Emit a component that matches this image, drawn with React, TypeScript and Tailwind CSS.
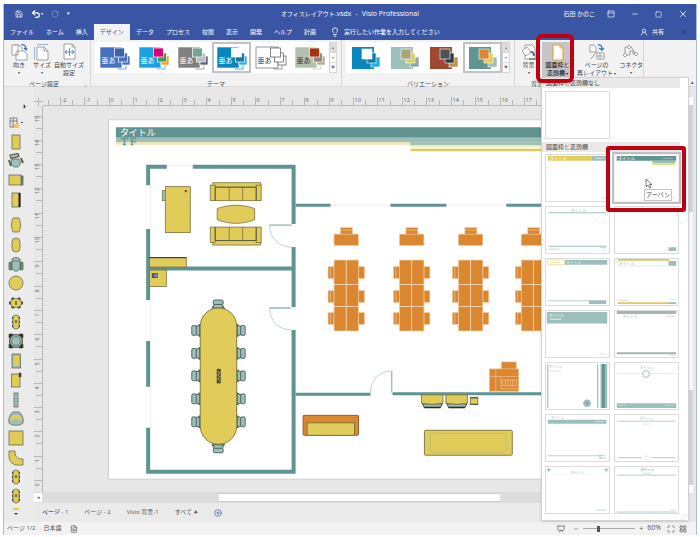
import type { ReactNode } from "react";
import { Lightbulb, Save, Undo2, RotateCw, UserRound, X, Minus, Square, PanelTop, PlusCircle, Presentation, Maximize, LayoutGrid, FileText } from "lucide-react";

const teal = "#5f9490";
const lightTeal = "#9cbfbc";
const yellow = "#e1cc5a";
const orange = "#db8730";
const line = "#77713f";

const tabs = ["ファイル", "ホーム", "挿入", "デザイン", "データ", "プロセス", "校閲", "表示", "開発", "ヘルプ", "計画"];

const themes = [
  { back: "#4472c4", front: "#3d64ac", mid: "#4472c4", far: "#4472c4", text: "#ffffff" },
  { back: "#1ca0e3", front: "#dc0073", mid: "#3f9c48", far: "#ff9b0b", text: "#ffffff" },
  { back: "#808080", front: "#75a596", mid: "#bdbdbd", far: "#566275", text: "#ffffff" },
  { back: "#0787bd", front: "#ffffff", mid: "#137aa5", far: "#1fb0e6", text: "#ffffff" },
  { back: "#ffffff", front: "#ffffff", mid: "#ffffff", far: "#ffffff", text: "#444444" },
  { back: "#b4c0ae", front: "#a73010", mid: "#8b8c7e", far: "#b3a78c", text: "#333333" },
];

const variants = [
  { back: "#0787bd", front: "#ffffff", mid: "#137aa5", far: "#1fb0e6" },
  { back: "#9cbfbc", front: "#a8a679", mid: "#d6cf61", far: "#8ea8a4" },
  { back: "#9e4830", front: "#4c5356", mid: "#33383c", far: "#c19145" },
  { back: "#5f9490", front: "#db8730", mid: "#e1cc5a", far: "#9cbfbc" },
];

function ThemeTile({ theme, selected }: { theme: (typeof themes)[number]; selected: boolean }) {
  const outline = theme.back === "#ffffff" ? "#555555" : "#ffffff";
  return (
    <button aria-label="テーマ" className={`w-[39px] h-[31px] flex items-center justify-center ${selected ? "border-2 border-[#c2c2c2]" : ""}`}>
      <svg width="32" height="26" viewBox="0 0 32 26" className="shrink-0">
        <path d="M19 18v6h8v-5M17 22l2-2 2 2" fill="none" stroke={theme.back === "#ffffff" ? "#777" : theme.back} strokeWidth=".7" />
        <rect x="1" y="2" width="22" height="21" fill={theme.back} stroke={outline} strokeWidth=".6" />
        <text x="2.5" y="18" fontSize="7" fill={theme.text}>亜あ</text>
        <rect x="23" y="11" width="8" height="9" fill={theme.far} stroke={outline} strokeWidth=".7" />
        <rect x="19.500" y="8" width="9" height="9" fill={theme.mid} stroke={outline} strokeWidth=".7" />
        <rect x="15.500" y="3" width="10" height="9" fill={theme.front} stroke={outline} strokeWidth=".7" />
      </svg>
    </button>
  );
}

function VariantTile({ variant, selected }: { variant: (typeof variants)[number]; selected: boolean }) {
  return (
    <button aria-label="バリエーション" className={`w-[39px] h-[31px] flex items-center justify-center ${selected ? "border-2 border-[#c2c2c2]" : ""}`}>
      <svg width="30" height="24" viewBox="0 0 30 24" className="shrink-0">
        <rect x="1" y="1" width="22" height="22" fill={variant.back} />
        <rect x="20" y="11" width="9" height="10" fill={variant.far} stroke="#fff" strokeWidth=".6" />
        <rect x="16" y="7" width="9" height="10" fill={variant.mid} stroke="#fff" strokeWidth=".6" />
        <rect x="11" y="3" width="10" height="10" fill={variant.front} stroke="#fff" strokeWidth=".6" />
      </svg>
    </button>
  );
}

function GalleryScroll() {
  return (
    <div className="w-2 flex flex-col border border-[#d8d8d8] text-[#777777] bg-[#fafafa]">
      <button aria-label="上へ" className="flex-1 bg-[#dcdcdc] text-[4px] leading-none">▴</button>
      <button aria-label="下へ" className="flex-1 border-y border-[#d8d8d8] text-[4px] leading-none">▾</button>
      <button aria-label="その他" className="flex-1 text-[4px] leading-none">▼</button>
    </div>
  );
}

function RibbonButton({ icon, label, label2, arrow, className = "" }: { icon: ReactNode; label: string; label2?: string; arrow?: boolean; className?: string }) {
  return (
    <button className={`h-[38px] pt-px flex flex-col items-center whitespace-nowrap text-[6px] leading-[8px] ${className}`}>
      <svg width="18" height="18" viewBox="0 0 18 18" fill="none" stroke="#8a8a8a" strokeWidth=".8" className="shrink-0">{icon}</svg>
      <span>{label}</span>
      {label2 ? <span>{label2}{arrow && <span className="text-[4px]"> ▾</span>}</span> : arrow && <span className="text-[4px]">▾</span>}
    </button>
  );
}

function Ribbon() {
  return (
    <div className="h-[47px] flex bg-[#f2f2f2] text-[#444444] border-b border-[#dcdcdc]">
      <section className="w-[87px] shrink-0 flex flex-col border-r border-[#d5d5d5] pt-0.5">
        <div className="flex">
          <RibbonButton className="w-[30px]" label="向き" arrow icon={<><path d="M3 12V2h6l3 3v2" fill="#fff" /><path d="M2 2h6v10H2zM8 8h6l3 3v6H6V9z" fill="#fff" /><path d="M11 2c3-1 5 1 5 4m-2-1 2 2 1-2" stroke="#3978b0" strokeWidth="1.2" /></>} />
          <RibbonButton className="w-4" label="サイズ" arrow icon={<><path d="M4 4h7l4 4v9H4z" fill="#fff" /><path d="M11 4v4h4" /><path d="M4 1.500h11M1.500 4v13" stroke="#77a7cf" /></>} />
          <RibbonButton className="w-[38px]" label="自動サイズ" label2="設定" icon={<><path d="M4 1h8l3 3v12H4z" fill="#fff" /><path d="M12 1v3h3" /><path d="M5 9h9M9.500 5v8M7 7 5 9l2 2M12 7l2 2-2 2" stroke="#3978b0" /></>} />
        </div>
        <div className="flex items-center text-[6px] leading-[8px]">
          <span className="flex-1 text-center">ページ設定</span>
          <button aria-label="ページ設定の詳細" className="pr-1 text-[5px]">⌟</button>
        </div>
      </section>
      <section className="w-[251px] shrink-0 flex flex-col border-r border-[#d5d5d5] pt-0.5 px-1">
        <div className="flex h-[31px] mb-[7px] bg-white">
          {themes.map((theme, i) => (
            <ThemeTile key={i} theme={theme} selected={i === 3} />
          ))}
          <GalleryScroll />
        </div>
        <div className="text-[6px] leading-[8px] text-center">テーマ</div>
      </section>
      <section className="w-[173px] shrink-0 flex flex-col border-r border-[#d5d5d5] pt-0.5 px-1">
        <div className="flex h-[31px] mb-[7px] bg-white">
          {variants.map((variant, i) => (
            <VariantTile key={i} variant={variant} selected={i === 3} />
          ))}
          <GalleryScroll />
        </div>
        <div className="text-[6px] leading-[8px] text-center">バリエーション</div>
      </section>
      <section className="relative w-[59px] shrink-0 flex flex-col border-r border-[#d5d5d5]">
        <div className="flex">
          <RibbonButton className="w-[27px] mt-0.5" label="背景" arrow icon={<><path d="M5 2h7l3 3v11H5z" fill="#fff" /><path d="m2 8 5-4 4 5-5 4z" fill="#fff" /><path d="M11 9c2 0 3 2 3 4" stroke="#3978b0" strokeWidth="2" /><path d="M9 16h7" stroke="#333" /></>} />
          <RibbonButton className="w-[31px] mt-0.5 bg-[#c5c5c5] text-black" label="図面枠と" label2="表題欄" arrow icon={<><path d="M4 2h7l3 3v12H4z" fill="#fff" stroke="#e1a541" strokeWidth="1.200" /><path d="M11 2v3h3" stroke="#e1a541" /></>} />
        </div>
        <div className="pl-4 text-[6px] leading-[8px]">背景</div>
        <div className="absolute z-20 -top-1.5 left-[21px] w-[38px] h-[49px] rounded-md border-4 border-[#c00010]" />
      </section>
      <section className="w-[70px] shrink-0 flex border-r border-[#d5d5d5] pt-0.5">
        <RibbonButton className="w-[46px]" label="ページの" label2="再レイアウト" arrow icon={<><path d="M2 2h4l2 2v5H2zM9 10h7v6H9zM12 10v6M9 13h7" fill="#fff" /><path d="M10 2c4-1 4 3 4 5l2-2m-2 2-3-2" stroke="#2f79b5" strokeWidth="1.300" /><path d="m3 16 6-8" /></>} />
        <RibbonButton className="w-6" label="コネクタ" arrow icon={<><path d="m7 2 2 2-2 2-2-2zM3 10l2 2-2 2-2-2zM14 9l2 2-2 2-2-2z" fill="#fff" /><path d="M5 4H3v6m6-6 4 6M5 12h3V8h3v3h1" /></>} />
      </section>
      <div className="flex-1 flex items-end justify-end pr-0.5">
        <button aria-label="リボンを折りたたむ" className="text-[5px] leading-[8px]">▴</button>
      </div>
    </div>
  );
}

// Small stencil previews for the minimized shapes pane
const stencils: ReactNode[] = [
  <rect x="4" y="1" width="8" height="14" />,
  <><path d="m2 2 8-1.500 1 3-8 2z" fill={lightTeal} strokeWidth="1.200" /><path d="M4 6h7l2 4-3 4H6l-3-3z" fill={lightTeal} /><path d="m1 7 2 6m10-8 2 5" strokeWidth="2" /></>,
  <><rect x="12" y="4" width="3" height="9" fill={teal} /><rect x="1" y="3" width="12" height="10" /></>,
  <><rect x="4" y="1" width="8" height="14" /><path d="M11.500 1v14" strokeWidth="2" stroke="#222" /></>,
  <path d="M5 1h6c2 4 2 10 0 14H5C3 11 3 5 5 1z" />,
  <rect x="4" y="1" width="8" height="14" rx="4" />,
  <><rect x="1" y="6" width="3" height="8" rx="1" fill={teal} /><rect x="12" y="6" width="3" height="8" rx="1" fill={teal} /><path d="M4 3c3-2 5-2 8 0v10c-3 3-5 3-8 0z" fill={lightTeal} /><path d="M4 5h8" /></>,
  <circle cx="8" cy="8" r="7" />,
  <><path d="m4 3 8 10M12 3 4 13M1 8h14" strokeWidth="3" stroke="#394a49" /><ellipse cx="8" cy="8" rx="5.500" ry="4.500" /><path d="M8 6v4" strokeWidth="1.500" /></>,
  <><path d="M4 4h8M4 8h8M4 12h8" strokeWidth="2.500" stroke="#394a49" /><rect x="5" y="1" width="6" height="14" rx="3" /><path d="M8 6v3" strokeWidth="1.500" /></>,
  <><path d="M1 1h4v4H1zM11 1h4v4h-4zM1 11h4v4H1zM11 11h4v4h-4z" fill="#222" /><circle cx="8" cy="8" r="6.500" fill={lightTeal} strokeWidth="1.200" /><circle cx="8" cy="8" r="4.500" fill={lightTeal} /></>,
  <><rect x="4" y="1" width="8.500" height="14" fill={lightTeal} /><rect x="5.500" y="3" width="5.500" height="10" stroke="none" /></>,
  <><rect x="3.500" y="2" width="8.500" height="13" /><path d="M11 1h2v4h-2z" fill="#333" /></>,
  <rect x="6" y="1" width="4" height="14" fill={lightTeal} />,
  <><path d="M5 1h6c3 2 5 7 4 11-2 3-12 3-14 0C0 8 2 3 5 1z" fill={lightTeal} /><path d="M2 9c2-7 10-7 12 0l-2 1c-2-3-6-3-8 0z" stroke="none" /></>,
  <rect x="1" y="1" width="14" height="14" />,
  <path d="M1 1h6v3c1 3 3 5 8 5v6H8c-5-1-7-5-7-9z" />,
  <><path d="M4 4h8M4 8h8M4 12h8" strokeWidth="2.500" stroke="#394a49" /><rect x="5" y="1" width="6" height="14" rx="3" /><path d="M8 6v3" strokeWidth="1.500" /></>,
  <><path d="M4 4h8M4 8h8M4 12h8" strokeWidth="2.500" stroke="#394a49" /><rect x="5" y="1" width="6" height="14" rx="3" /><path d="M8 6v3" strokeWidth="1.500" /></>,
];

function ShapesPane() {
  return (
    <aside className="w-[30px] shrink-0 flex flex-col bg-[#ebebeb]">
      <button aria-label="図形ウィンドウを展開" className="h-[26px] pt-3 pr-2 text-right text-[9px] leading-[14px] font-bold text-[#222222]">›</button>
      <button aria-label="ステンシル" className="h-[19px] pl-1 flex items-center">
        <svg width="18" height="14" viewBox="0 0 18 14" fill="none" stroke="#777" strokeWidth=".9">
          <path d="M2 2h7v9H2zM2 5h7M5 2v9" />
          <path d="M6 8h5v4H6z" fill="#efc382" stroke="none" />
          <path d="m13 6 1 1 1-1" stroke="#333" />
        </svg>
      </button>
      <div className="flex-1 flex flex-col">
        {stencils.map((shape, i) => (
          <button key={i} aria-label="図形" className={`flex-1 w-6 flex items-center justify-center ${i === 4 ? "mt-1.5" : ""}`}>
            <svg width="16" height="16" viewBox="0 0 16 16" fill={yellow} stroke="#5a5a45" strokeWidth=".7">{shape}</svg>
          </button>
        ))}
      </div>
      <button aria-label="その他の図形" className="h-4 w-6 flex justify-center pt-0.5">
        <svg width="8" height="8" viewBox="0 0 8 8"><path d="M1 0h6v2H1z" fill={yellow} /><path d="M2 5h4L4 7z" fill="#333" /></svg>
      </button>
    </aside>
  );
}

function HorizontalRuler() {
  const ticks = Array.from({ length: 26 }, (_, i) => i - 2);
  return (
    <svg width="656" height="19" viewBox="34 87 656 19" className="block" stroke="#b9b9b9" strokeWidth="1">
      <path d="M34 101.500h9M38.500 97v9M43 105.500h647" />
      {ticks.map((n) => {
        const x = Math.round(108.700 + n * 24.430) + 0.5;
        return (
          <g key={n}>
            <path d={`M${x} 97v8M${x - 12} 100v5`} />
            <text x={x + 1} y="102" fontSize="5.500" fill="#666" stroke="none">{n}</text>
          </g>
        );
      })}
    </svg>
  );
}

function VerticalRuler() {
  const ticks = Array.from({ length: 16 }, (_, i) => i);
  return (
    <svg width="9" height="386" viewBox="34 106 9 386" className="block shrink-0" stroke="#b9b9b9" strokeWidth="1">
      <path d="M42.500 106v386" />
      {ticks.map((n) => {
        const y = Math.round(480 - n * 24.300) + 0.5;
        return (
          <g key={n}>
            <path d={`M34 ${y}h8M36 ${y + 12}h6`} />
            <text transform={`translate(39 ${y + 6}) rotate(-90)`} fontSize="5.500" fill="#666" stroke="none">{n}</text>
          </g>
        );
      })}
    </svg>
  );
}

function DeskGroup({ x }: { x: number }) {
  return (
    <g transform={`translate(${x} 0)`} fill={orange} stroke="#f2d1ad" strokeWidth=".6">
      <rect x="6.500" y="227.500" width="12" height="7" />
      <path d="M6.500 230h12" />
      <rect x="0" y="234" width="24.500" height="11.500" />
      {[266.5, 290.5, 312.5].map((y) => (
        <g key={y}>
          <rect x="-6" y={y} width="6" height="12" />
          <path d={`M-3.500 ${y}v12M27.500 ${y}v12`} />
          <rect x="24.500" y={y} width="6" height="12" />
        </g>
      ))}
      <rect x="0" y="260" width="24.500" height="71" />
      <path d="M12.200 260v71M0 284.500h24.500M0 306.500h24.500" strokeWidth="1" />
    </g>
  );
}

function Sofa({ y, flip }: { y: number; flip?: boolean }) {
  return (
    <g transform={flip ? `translate(210 ${y + 18.5}) scale(1 -1)` : `translate(210 ${y})`} fill={yellow} stroke={line} strokeWidth=".8">
      <path d="M3 .500h48v3l-2 2H5l-2-2z" />
      <rect x=".5" y="3" width="5" height="15.500" />
      <rect x="46.500" y="3" width="5" height="15.500" />
      <rect x="5.500" y="5" width="41" height="13.500" />
      <path d="M19.500 5v13.500M33 5v13.500" />
      <path d="M5.500 18V5h41v13" fill="none" stroke="#4f5d4d" />
    </g>
  );
}

function Chair({ x, y, angle }: { x: number; y: number; angle: number }) {
  return (
    <g transform={`translate(${x} ${y}) rotate(${angle})`} fill={lightTeal} stroke="#3d4c4b" strokeWidth=".8">
      <path d="M-6 4h12M-5 2-6.500 5M5 2l1.500 3" />
      <path d="M-4-1h8l1 5H-5z" />
      <rect x="-5" y="-4" width="10" height="4.500" rx="1.500" />
    </g>
  );
}

function Drawing() {
  return (
    <svg width="647" height="386" viewBox="43 106 647 386" className="block">
      <rect x="108.500" y="119.500" width="700" height="360" fill="#fff" stroke="#cfcfcf" />
      {/* title block */}
      <rect x="116" y="127" width="590" height="10.500" fill={teal} />
      <rect x="116" y="137.500" width="590" height="4.500" fill={lightTeal} />
      <rect x="116" y="142" width="590" height="2.500" fill="#f0e4ab" />
      <rect x="411" y="142" width="290" height="3" fill={lightTeal} />
      <rect x="411" y="145" width="290" height="2" fill="#f3eabb" />
      <rect x="411" y="148.500" width="290" height="2.500" fill={yellow} />
      <text x="120" y="136" fontSize="9" fill="#fff">タイトル</text>
      <text x="121" y="145" fontSize="11" fill={teal} stroke={teal} strokeWidth=".3" className="font-['Liberation_Serif',serif]">T F</text>

      {/* walls */}
      <path d="M150.500 184v45M150.500 300v41M150.500 387v41M167 165.500h26M331 205h60M447 205h60" stroke="#ededed" fill="none" />
      <path d="M148.300 185v-18.500H167M193 166.500h103M294 165v59M148.300 229v71M148.300 341v46M148.300 428v44H294V330M294 247v60M150 268.500h142" stroke={teal} strokeWidth="4" fill="none" />
      <path d="M296 205h35M391 205h56M507 205h60M296 394.500h75M393 394h150" stroke={teal} strokeWidth="3" fill="none" />
      <path d="M292 225h-22c0 13 9 22 22 22M292 308h-22c0 13 9 22 22 22M371 393c0-13 9-22 21-22v22" stroke="#b5d0cd" strokeWidth=".9" fill="none" />
      <path d="M270 225h22M270 308h21M392.300 371v21" stroke={lightTeal} strokeWidth="1.300" />

      {/* office */}
      <g fill={yellow} stroke={line} strokeWidth=".8">
        <rect x="162.500" y="190.500" width="4" height="10" fill={lightTeal} />
        <rect x="165.500" y="186.500" width="25" height="46" />
        <rect x="185" y="190" width="2" height="2" fill="#7d3a1c" stroke="none" />
        <path d="M217.500 208.500c12-4.500 26-4.500 37.500 0v11c-12 5-26 5-37.500 0z" />
        <rect x="149.500" y="257.500" width="37" height="9.500" />
        <path d="M149.500 257.500h37" stroke="#444" strokeWidth="1.200" />
        <rect x="149.500" y="270" width="17" height="16.500" />
        <rect x="152" y="273" width="6" height="5" fill="#555" stroke="none" />
        <rect x="154.500" y="274" width="3" height="3" fill="#88a" stroke="none" />
      </g>
      <Sofa y={182} />
      <Sofa y={227} flip />

      {/* meeting room */}
      {[330.5, 353.5, 376, 399, 422].map((y) => (
        <g key={y}>
          <Chair x={196} y={y} angle={-90} />
          <Chair x={241.500} y={y} angle={90} />
        </g>
      ))}
      <Chair x={218.500} y={304} angle={0} />
      <Chair x={218.500} y={449} angle={180} />
      <rect x="200.500" y="308" width="36.500" height="136.500" rx="18.200" fill={yellow} stroke={line} strokeWidth=".9" />
      <rect x="217" y="369" width="4" height="14.500" fill="#4c4939" />
      <path d="m217.500 371 3 2-3 2 3 2-3 2 3 2" stroke="#bbb06c" strokeWidth=".8" fill="none" />

      <DeskGroup x={334.500} />
      <DeskGroup x={400} />
      <DeskGroup x={459} />
      <DeskGroup x={522} />

      {/* copier */}
      <g fill={orange} stroke="#efc59a" strokeWidth=".7">
        <rect x="502" y="362" width="15" height="7.500" />
        <rect x="490" y="369" width="29.500" height="22.500" />
        <path d="M496.500 369v22.500M490 376.500h29.500M501.500 377v12h17M503 380h14v6h-14zM506 380v6M508.500 380v6M511 380v6M513.500 380v6" />
      </g>

      {/* lounge */}
      <g fill={yellow} stroke={line} strokeWidth=".9">
        {[422, 446.5].map((x) => (
          <g key={x}>
            <path d={`M${x + 1} 404h20l-2 4h-16z`} fill={lightTeal} stroke="#2f3b35" />
            <path d={`M${x + 3} 407.500h16`} stroke="#252e29" strokeWidth="1.300" />
            <path d={`M${x} 395h21.500v8.500q-10.500 2-21.500 0z`} />
          </g>
        ))}
        <rect x="471" y="397.500" width="7.500" height="7" />
        <path d="M471 398h7.500M471 404.500h7.500" stroke="#555" strokeWidth="1.300" />
        <rect x="303.500" y="415.500" width="55.500" height="20" rx="1" fill={orange} stroke="#8a5524" />
        <rect x="307.500" y="423" width="47.500" height="12.500" />
        <rect x="425" y="430.500" width="88" height="25" rx="1" />
        <rect x="431" y="433.500" width="76" height="19" rx="2" fill="none" stroke="#bcc073" />
      </g>
    </svg>
  );
}

// Previews of each border and title style, in gallery order
const borders: { name: string; art: ReactNode }[] = [
  { name: "タイトル 1", art: <><path d="M1 1h46v5H1z" fill={yellow} /><path d="M47 1h15v5H47z" fill={lightTeal} /><text x="3" y="5.500" fontSize="4.500" fill="#fff">タイトル</text><path d="M50 3.500h10" stroke="#fff" strokeWidth=".6" /><path d="M56 45h6" stroke="#ccc" strokeWidth=".6" /></> },
  { name: "アーバン", art: <><path d="M1 1h62v5H1z" fill={teal} /><path d="M38 6h24v2.500H38z" fill={lightTeal} /><path d="M38 8.500h24v2H38z" fill="#e8dc85" /><text x="2" y="5.500" fontSize="4.500" fill="#fff">タイトル</text><path d="M49 3.500h11M56 45h5" stroke="#ccc" strokeWidth=".6" /></> },
  { name: "タイトル 3", art: <><path d="M2 6h60M2 41h60" stroke={lightTeal} strokeWidth="1" /><text x="25" y="5" fontSize="4" fill={lightTeal}>タイトル</text><path d="M2 44h11M55 42.500h7M58 45h3" stroke={lightTeal} strokeWidth=".6" /></> },
  { name: "タイトル 4", art: <><path d="M2 1h17v3H2zM55 42h8v4h-8z" fill={lightTeal} /><text x="22" y="5" fontSize="4" fill={lightTeal}>タイトル</text></> },
  { name: "タイトル 5", art: <><path d="M1 1h18v5H1z" fill="none" stroke="#eee0a0" /><path d="M19 1h44v5H19zM44 43h18v4H44z" fill={lightTeal} /><path d="M1 43.500h43" stroke={lightTeal} strokeWidth=".7" /><text x="20" y="5.500" fontSize="4" fill="#e6f0ef">タイトル</text><path d="M3 3.500h11" stroke="#e8d78b" strokeWidth=".7" /></> },
  { name: "タイトル 6", art: <><path d="M2 0h54v2H2zM2 45h54v2H2z" fill={yellow} /><path d="M55 2h8v5h-8zM55 45h8v2h-8z" fill={lightTeal} /><path d="M2 2h53v5H2z" fill="none" stroke="#d0e1df" strokeWidth=".6" /><text x="3" y="6" fontSize="4" fill={lightTeal}>タイトル</text><path d="M3 43h10M57 42h5" stroke="#bbb" strokeWidth=".6" /></> },
  { name: "タイトル 7", art: <><path d="M0 1h63v12H0z" fill={lightTeal} /><text x="2" y="6" fontSize="4" fill="#f3faf9">タイトル</text><path d="M3 8.500h12" stroke="#e9f2f1" strokeWidth="1" /><path d="M55 45h7" stroke="#ccc" strokeWidth=".6" /></> },
  { name: "タイトル 8", art: <><path d="M1 0h62v3H1zM1 43h62v2H1z" fill="#a7b4b2" /><text x="7" y="7" fontSize="4" fill={lightTeal}>タイトル</text><path d="M52 5.500h10M56 46h6" stroke="#bbb" strokeWidth=".6" /></> },
  { name: "タイトル 9", art: <><path d="M1 1v46M53 1v46" stroke={lightTeal} strokeWidth="1.200" /><path d="M56 1h7v46h-7z" fill={lightTeal} /><path d="M59 1v46" stroke={teal} strokeWidth="3" /><circle cx="42" cy="42" r="4" fill={lightTeal} /><circle cx="42" cy="42" r="1.500" fill={teal} opacity=".5" /><text x="2" y="5" fontSize="3.500" fill={lightTeal}>タイトル</text><path d="M3 8.500h12" stroke="#bdd2d0" strokeWidth=".6" /></> },
  { name: "タイトル 10", art: <><text x="25" y="6" fontSize="3.500" fill={lightTeal}>タイトル</text><path d="M1 11h27M35 11h28" stroke="#d2e1df" strokeWidth=".6" /><circle cx="31.500" cy="11.500" r="3.500" fill="none" stroke={lightTeal} /><path d="M1 42h62v5H1z" fill={lightTeal} /><path d="M3 44h8M51 44h10" stroke="#d7e6e4" strokeWidth=".6" /></> },
  { name: "タイトル 11", art: <><path d="M1 5h61v4H1z" fill={lightTeal} /><text x="4" y="4.500" fontSize="3.500" fill={lightTeal}>タイトル</text><path d="M50 7h10" stroke="#fff" strokeWidth=".5" /><path d="M1 42.500h60M55 45h7M55.500 41v5" stroke={lightTeal} strokeWidth=".7" /></> },
  { name: "タイトル 12", art: <><text x="25" y="5" fontSize="3.500" fill={lightTeal}>タイトル</text><path d="M2 6.500h60M2 44.500h25M37 44.500h25" stroke={lightTeal} strokeWidth=".8" /><path d="M27 9.500h10M29 43h6M31 46h2" stroke="#c7d8d6" strokeWidth=".6" /></> },
  { name: "タイトル 13", art: <><path d="M0 3h4M2 1v4M60 3h4M62 1v4" stroke={lightTeal} strokeWidth="1.200" /><text x="25" y="7" fontSize="3.500" fill={lightTeal}>タイトル</text><path d="M4 7.500h57" stroke="#e6efee" strokeWidth=".5" /><path d="M51 45h11" stroke={lightTeal} strokeWidth=".6" /></> },
  { name: "タイトル 14", art: <><path d="M1 8.500h62M1 47h62" stroke={lightTeal} strokeWidth=".8" /><text x="26" y="4.500" fontSize="3.500" fill={teal}>タイトル</text><path d="M28 6.500h9M56 45h6" stroke="#bfd2d0" strokeWidth=".6" /></> },
];

function BordersMenu() {
  return (
    <div className="absolute z-10 top-[77px] right-[11px] w-[148px] pb-1.5 bg-white border border-[#d2d2d2] shadow-sm text-[#444444]">
      <h3 className="h-[10px] mr-2 pl-1 bg-[#e9e9e9] text-[6px] leading-[11px]">図面枠と表題欄なし</h3>
      <div className="p-[3px]">
        <button aria-label="図面枠と表題欄なし" className="block w-[65px] h-12 border border-[#dcdcdc]" />
      </div>
      <h3 className="h-[10px] mr-2 pl-1 bg-[#e9e9e9] text-[6px] leading-[10px]">図面枠と表題欄</h3>
      <div className="grid grid-cols-[65px_65px] gap-[4px] px-[3px] pt-[2px]">
        {borders.map((b, i) => (
          <div key={b.name} className="relative">
            <button aria-label={b.name} className={`block w-[65px] h-12 border ${i === 1 ? "border-[#eeeeee] outline-2 outline-[#c0c0c0]" : "border-[#dcdcdc]"}`}>
              <svg viewBox="0 0 64 48" className="block w-full h-full">{b.art}</svg>
            </button>
            {i === 1 && (
              <>
                <div className="absolute z-10 -top-2 -left-[8px] w-20 h-[66px] border-4 border-[#c00010] rounded-[3px]" />
                <svg width="8" height="11" viewBox="0 0 8 11" className="absolute top-[24px] left-[31px]">
                  <path d="M1 1v8l2-2 1.500 3 1.500-.7L4.500 6.500H7z" fill="#fff" stroke="#555" strokeWidth=".8" />
                </svg>
                <span role="tooltip" className="absolute top-[35px] left-[30px] px-px h-3 border border-[#c4c4c4] bg-white whitespace-nowrap text-[6px] leading-[10px]">アーバン</span>
              </>
            )}
          </div>
        ))}
      </div>
      <span className="absolute bottom-0 right-0.5 text-[5px] leading-[6px] text-[#999999]">⋰</span>
    </div>
  );
}

export default function App() {
  return (
    <div className="relative min-h-screen flex flex-col bg-white pt-1 pb-0.5 pl-[3px] pr-[3px] overflow-hidden font-['Open_Sans','Noto_Sans_CJK_JP',sans-serif]">
      <div className="flex-1 flex flex-col border-x border-[#aabfe0] bg-[#e7e7e7]">
        {/* Title bar */}
        <header className="bg-[#3a55a4] text-white">
          <div className="relative h-5 flex items-center justify-between text-[7px]">
            <div className="flex items-center gap-2 pl-[11px]">
              <button aria-label="上書き保存"><Save className="w-2 h-2" /></button>
              <button aria-label="元に戻す" className="flex items-center"><Undo2 className="w-2.5 h-2.5" strokeWidth={3} /><span className="text-[4px]">▾</span></button>
              <button aria-label="やり直し" className="opacity-40"><RotateCw className="w-2 h-2" /></button>
              <button aria-label="クイックアクセスの設定" className="text-[5px]">▾</button>
            </div>
            <div className="absolute inset-x-24 flex justify-center items-baseline gap-1 pointer-events-none">
              <span><span className="text-[6px]">オフィスレイアウト</span>.vsdx</span>
              <span>-</span>
              <span>Visio Professional</span>
            </div>
            <div className="flex items-center pr-2">
              <span className="text-[6px] pr-3">石田 かのこ</span>
              <button aria-label="リボンの表示オプション"><PanelTop className="w-2 h-2" /></button>
              <button aria-label="最小化" className="ml-4"><Minus className="w-2 h-2" /></button>
              <button aria-label="最大化" className="ml-4"><Square className="w-[7px] h-[7px]" /></button>
              <button aria-label="閉じる" className="ml-4"><X className="w-2.5 h-2.5" /></button>
            </div>
          </div>
          <nav className="h-4 flex items-stretch text-[6px]">
            {tabs.map((tab) => (
              <button key={tab} className={`px-1.5 shrink-0 ${tab === "デザイン" ? "bg-[#f2f2f2] text-[#3a55a4]" : ""}`}>{tab}</button>
            ))}
            <label className="flex items-center gap-1 pl-2">
              <Lightbulb className="w-2.5 h-2.5" />
              <input aria-label="操作アシスト" placeholder="実行したい作業を入力してください" className="w-[110px] bg-transparent placeholder:text-white outline-none" />
            </label>
            <button className="ml-auto flex items-center gap-1"><UserRound className="w-2 h-2" />共有</button>
            <button aria-label="文書を閉じる" className="pl-4 pr-2 text-[#1f2f63]"><X className="w-2 h-2" /></button>
          </nav>
        </header>

        <Ribbon />

        {/* Workspace */}
        <div className="flex-1 flex min-h-0">
          <ShapesPane />
          <main className="flex-1 min-w-0 flex flex-col">
            <div className="overflow-hidden"><HorizontalRuler /></div>
            <div className="flex-1 flex overflow-hidden">
              <VerticalRuler />
              <Drawing />
            </div>
            <div className="h-[11px] flex items-center bg-[#dddddd] text-[5px] text-[#555555]">
              <button aria-label="左へスクロール" className="w-2 h-[9px] bg-white leading-[9px]">◂</button>
              <div className="w-[27%] shrink-0" />
              <div className="w-[43%] h-[9px] bg-white border-y border-[#cccccc]" />
            </div>
            <div className="h-[19px] flex items-center gap-4 pl-2 bg-[#eaeaea] text-[6px] text-[#555555] whitespace-nowrap">
              <button className="font-medium text-[#3a55a4]">ページ - 1</button>
              <button>ページ - 2</button>
              <button>Visio 背景-1</button>
              <button>すべて <span className="text-[4px]">▲</span></button>
              <button aria-label="ページの挿入"><PlusCircle className="w-2 h-2 text-[#3a55a4]" /></button>
            </div>
          </main>
          <div className="w-1 mr-[3px] mt-2.5 mb-[29px] flex flex-col bg-[#d4d4d4]">
            <button aria-label="上へスクロール" className="h-2 bg-white" />
            <div className="h-[27%]" />
            <div className="h-[45%] bg-[#f8f8f8]" />
            <button aria-label="下へスクロール" className="mt-auto h-2 bg-white" />
          </div>
        </div>

        {/* Status bar */}
        <footer className="h-[13px] flex items-center bg-[#f2f2f2] px-[3px] text-[6px] text-[#555555]">
          <span>ページ 1/2</span>
          <span className="ml-2">日本語</span>
          <button aria-label="マクロの記録" className="ml-2"><FileText className="w-2 h-2" /></button>
          <button aria-label="プレゼンテーション モード" className="ml-auto"><Presentation className="w-2 h-2" /></button>
          <button aria-label="縮小" className="ml-2 leading-none"><Minus className="w-1.5 h-1.5" /></button>
          <input type="range" aria-label="ズーム" defaultValue={28} className="ml-1 w-[52px] h-px appearance-none bg-[#aaaaaa] [&::-webkit-slider-thumb]:appearance-none [&::-webkit-slider-thumb]:w-[3px] [&::-webkit-slider-thumb]:h-1.5 [&::-webkit-slider-thumb]:bg-[#555555]" />
          <button aria-label="拡大" className="ml-1 leading-none text-[7px]">+</button>
          <span className="ml-1 text-[7px]">60%</span>
          <button aria-label="ウィンドウに合わせる" className="ml-1.5"><Maximize className="w-2 h-2" /></button>
          <button aria-label="ウィンドウの切り替え" className="ml-1 mr-1.5"><LayoutGrid className="w-2 h-2" /></button>
        </footer>
      </div>
      <BordersMenu />
    </div>
  );
}
